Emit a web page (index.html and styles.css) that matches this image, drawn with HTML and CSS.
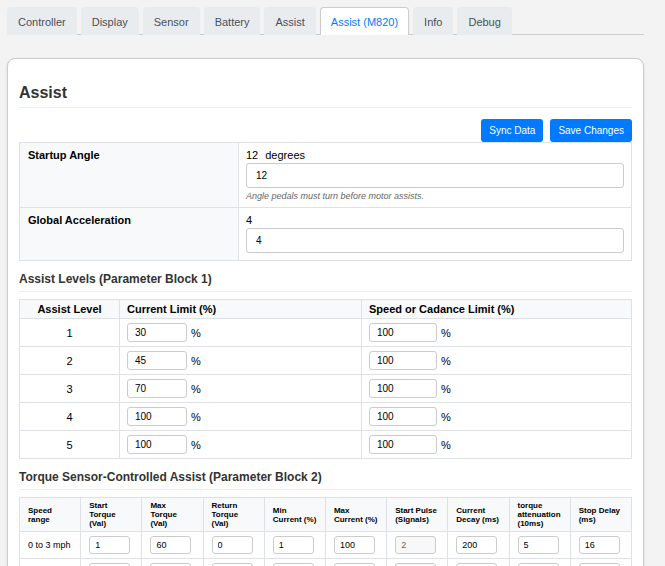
FILE: index.html
```html
<!DOCTYPE html>
<html lang="en">
<head>
<meta charset="utf-8">
<title>Assist (M820)</title>
<link rel="stylesheet" href="styles.css">
</head>
<body>
<nav class="tabs">
  <button class="tab" type="button">Controller</button>
  <button class="tab" type="button">Display</button>
  <button class="tab" type="button">Sensor</button>
  <button class="tab" type="button">Battery</button>
  <button class="tab" type="button">Assist</button>
  <button class="tab tab-active" type="button">Assist (M820)</button>
  <button class="tab" type="button">Info</button>
  <button class="tab" type="button">Debug</button>
</nav>
<main class="card">
  <h2 class="title">Assist</h2>
  <div class="actions">
    <button class="btn" type="button">Sync Data</button>
    <button class="btn" type="button">Save Changes</button>
  </div>
  <table class="grid settings">
    <tr class="row-angle">
      <th scope="row"><label for="angle">Startup Angle</label></th>
      <td>
        <div class="value"><span>12</span><span>degrees</span></div>
        <input class="field" id="angle" type="text" value="12">
        <p class="note">Angle pedals must turn before motor assists.</p>
      </td>
    </tr>
    <tr class="row-accel">
      <th scope="row"><label for="accel">Global Acceleration</label></th>
      <td>
        <div class="value"><span>4</span></div>
        <input class="field" id="accel" type="text" value="4">
      </td>
    </tr>
  </table>

  <h3 class="subtitle">Assist Levels (Parameter Block 1)</h3>
  <table class="grid levels">
    <colgroup><col class="col-level"><col class="col-current"><col></colgroup>
    <thead>
      <tr><th scope="col">Assist Level</th><th scope="col" id="cur">Current Limit (%)</th><th scope="col" id="spd">Speed or Cadance Limit (%)</th></tr>
    </thead>
    <tbody>
      <tr><td id="l1">1</td><td><div class="unit"><input class="field" type="text" aria-labelledby="cur l1" value="30">%</div></td><td><div class="unit wide"><input class="field" type="text" aria-labelledby="spd l1" value="100">%</div></td></tr>
      <tr><td id="l2">2</td><td><div class="unit"><input class="field" type="text" aria-labelledby="cur l2" value="45">%</div></td><td><div class="unit wide"><input class="field" type="text" aria-labelledby="spd l2" value="100">%</div></td></tr>
      <tr><td id="l3">3</td><td><div class="unit"><input class="field" type="text" aria-labelledby="cur l3" value="70">%</div></td><td><div class="unit wide"><input class="field" type="text" aria-labelledby="spd l3" value="100">%</div></td></tr>
      <tr><td id="l4">4</td><td><div class="unit"><input class="field" type="text" aria-labelledby="cur l4" value="100">%</div></td><td><div class="unit wide"><input class="field" type="text" aria-labelledby="spd l4" value="100">%</div></td></tr>
      <tr><td id="l5">5</td><td><div class="unit"><input class="field" type="text" aria-labelledby="cur l5" value="100">%</div></td><td><div class="unit wide"><input class="field" type="text" aria-labelledby="spd l5" value="100">%</div></td></tr>
    </tbody>
  </table>

  <h3 class="subtitle">Torque Sensor-Controlled Assist (Parameter Block 2)</h3>
  <table class="grid torque">
    <thead>
      <tr>
        <th scope="col">Speed<br>range</th>
        <th scope="col" id="t1">Start<br>Torque<br>(Val)</th>
        <th scope="col" id="t2">Max<br>Torque<br>(Val)</th>
        <th scope="col" id="t3">Return<br>Torque<br>(Val)</th>
        <th scope="col" id="t4">Min<br>Current (%)</th>
        <th scope="col" id="t5">Max<br>Current (%)</th>
        <th scope="col" id="t6">Start Pulse<br>(Signals)</th>
        <th scope="col" id="t7">Current<br>Decay (ms)</th>
        <th scope="col" id="t8">torque<br>attenuation<br>(10ms)</th>
        <th scope="col" id="t9">Stop Delay<br>(ms)</th>
      </tr>
    </thead>
    <tbody>
      <tr>
        <td>0 to 3 mph</td>
        <td><input class="field" type="text" aria-labelledby="t1" value="1"></td>
        <td><input class="field" type="text" aria-labelledby="t2" value="60"></td>
        <td><input class="field" type="text" aria-labelledby="t3" value="0"></td>
        <td><input class="field" type="text" aria-labelledby="t4" value="1"></td>
        <td><input class="field" type="text" aria-labelledby="t5" value="100"></td>
        <td><input class="field" type="text" aria-labelledby="t6" value="2" disabled></td>
        <td><input class="field" type="text" aria-labelledby="t7" value="200"></td>
        <td><input class="field" type="text" aria-labelledby="t8" value="5"></td>
        <td><input class="field" type="text" aria-labelledby="t9" value="16"></td>
      </tr>
      <tr>
        <td></td>
        <td><input class="field" type="text" aria-labelledby="t1"></td>
        <td><input class="field" type="text" aria-labelledby="t2"></td>
        <td><input class="field" type="text" aria-labelledby="t3"></td>
        <td><input class="field" type="text" aria-labelledby="t4"></td>
        <td><input class="field" type="text" aria-labelledby="t5"></td>
        <td><input class="field" type="text" aria-labelledby="t6" disabled></td>
        <td><input class="field" type="text" aria-labelledby="t7"></td>
        <td><input class="field" type="text" aria-labelledby="t8"></td>
        <td><input class="field" type="text" aria-labelledby="t9"></td>
      </tr>
    </tbody>
  </table>
</main>
</body>
</html>
```
FILE: styles.css
```css
* { box-sizing: border-box; }

html { overflow: hidden; height: 100%; }

body {
  margin: 0;
  padding: 7px 21px 0 7px;
  background: #f3f3f3;
  color: #000;
  font: 11px/14px "Liberation Sans", Arial, sans-serif;
}

button, input { font-family: inherit; }

.tabs {
  display: flex;
  gap: 4px;
  border-bottom: 1px solid #ccc;
  margin-bottom: 23px;
}

.tab {
  height: 28px;
  margin: 0 0 -1px;
  padding: 0 10px;
  border: 1px solid #e9ecef;
  border-bottom: 0;
  border-radius: 4px 4px 0 0;
  background: #e9ecef;
  color: #495057;
  font-size: 11px;
  white-space: nowrap;
}

.tab-active {
  background: #fff;
  border-color: #ccc;
  color: #007bff;
}

.card {
  padding: 24px 11px;
  border: 1px solid #ccc;
  border-radius: 8px;
  background: #fff;
  box-shadow: 0 1px 3px rgba(0, 0, 0, 0.1);
}

.title {
  margin: 0 0 11px;
  padding-bottom: 4px;
  border-bottom: 1px solid #eee;
  color: #333;
  font-size: 16px;
  line-height: 20px;
}

.subtitle {
  margin: 10px 0 7px;
  padding-bottom: 3px;
  border-bottom: 1px solid #eee;
  color: #333;
  font-size: 12px;
  line-height: 17px;
}

.actions {
  display: flex;
  justify-content: flex-end;
  gap: 7px;
}

.btn {
  height: 23px;
  padding: 0 8px;
  border: 0;
  border-radius: 3px;
  background: #007bff;
  color: #fff;
  font-size: 10px;
}

.grid {
  width: 100%;
  table-layout: fixed;
  border-collapse: collapse;
}

.grid th,
.grid td {
  padding: 0 7px;
  border: 1px solid #dee2e6;
  text-align: left;
}

.grid th { background: #f8f9fa; }

.field {
  display: block;
  width: 100%;
  margin: 0;
  padding: 0 7px;
  border: 1px solid #ccc;
  border-radius: 3px;
  background: #fff;
  color: #000;
  font-size: 10px;
}

.field:disabled {
  background: #f8f8f8;
  color: #666;
}

.settings th,
.settings td {
  padding-top: 5px;
  vertical-align: top;
}

.settings th { width: 219px; padding-left: 8px; }

.settings .field { height: 25px; padding: 0 9px; }

.row-angle { height: 65px; }

.row-accel { height: 53px; }

.value {
  display: flex;
  gap: 7px;
  margin-bottom: 1px;
}

.note {
  margin: 2px 0 0;
  color: #666;
  font-size: 9px;
  font-style: italic;
  line-height: 12px;
}

.col-level { width: 100px; }

.col-current { width: 242px; }

.levels tr { height: 28px; }

.levels thead tr { height: 19px; }

.levels th:first-child,
.levels td:first-child { text-align: center; }

.unit {
  display: flex;
  align-items: center;
  gap: 4px;
}

.unit .field { width: 60px; height: 19px; }

.wide .field { width: 68px; }

.torque th {
  height: 34px;
  padding: 0 0 0 8px;
  font-size: 8px;
  line-height: 9px;
  white-space: nowrap;
}

.torque td {
  height: 27px;
  padding: 0 0 0 8px;
  font-size: 9px;
  white-space: nowrap;
}

.torque .field {
  width: 41px;
  height: 18px;
  padding: 0 5px;
  font-size: 9px;
}
```
